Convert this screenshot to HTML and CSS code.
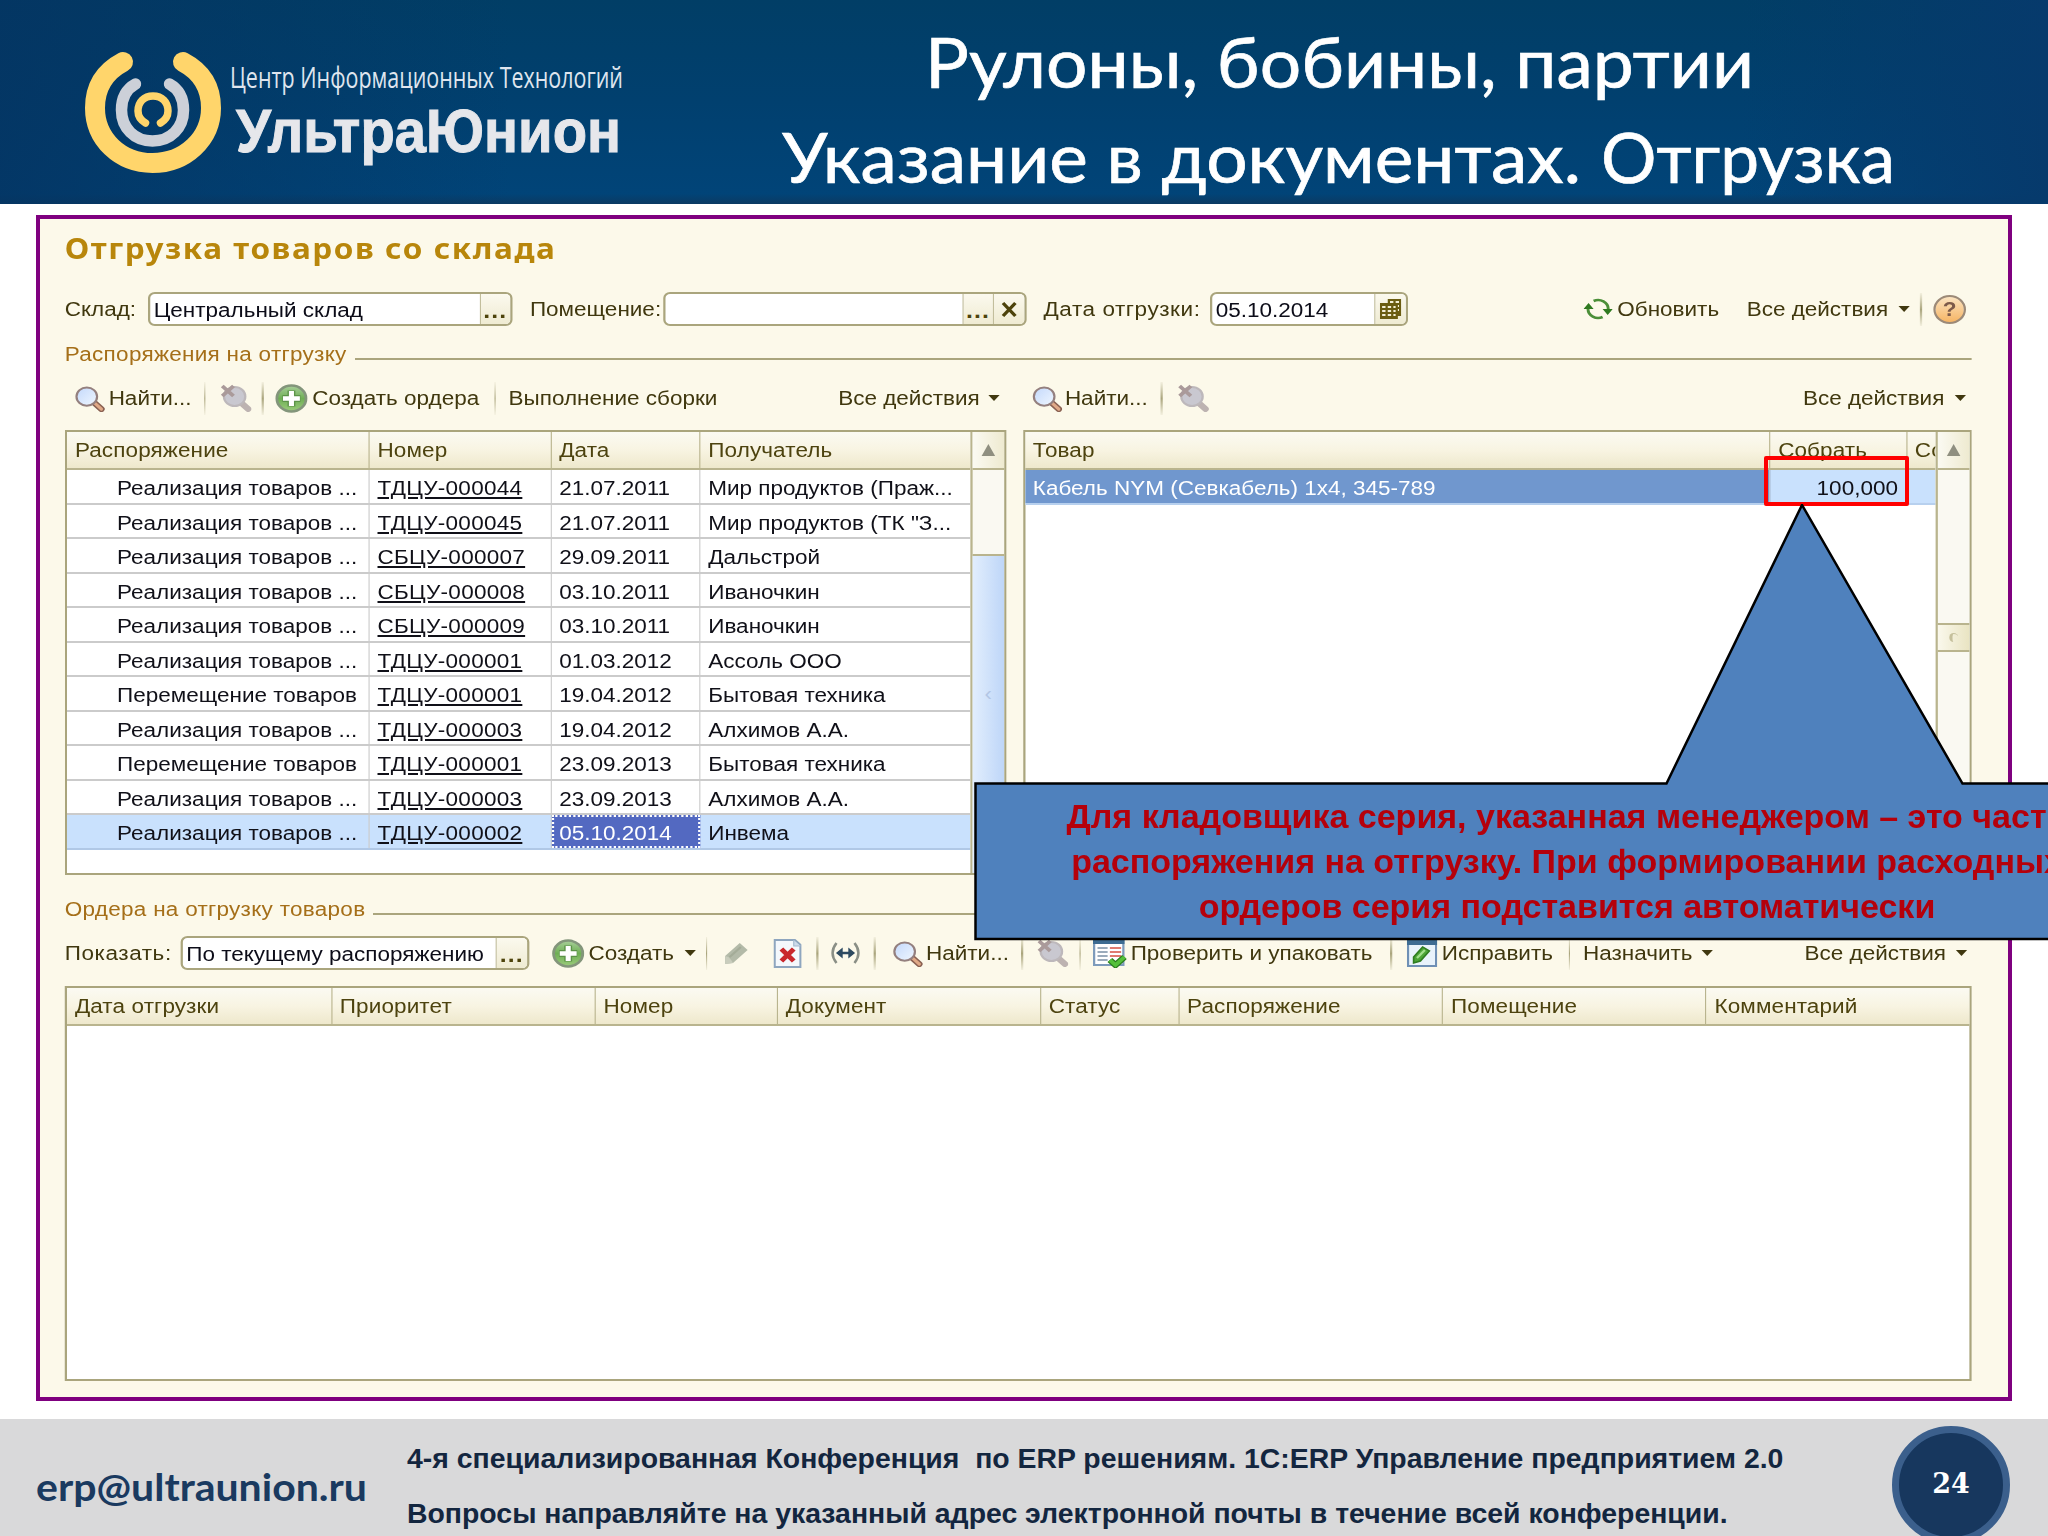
FILE: index.html
```html
<!DOCTYPE html>
<html lang="ru">
<head>
    <meta charset="UTF-8">
    <title>Рулоны, бобины, партии</title>
    <link rel="stylesheet" href="styles.css">
</head>
<body>
    <svg class="sprite" width="0" height="0">
        <defs>
            <linearGradient id="lens" x1="0" y1="0" x2="1" y2="1">
                <stop offset="0" stop-color="#c3d8fb"/>
                <stop offset="1" stop-color="#f0f7ff"/>
            </linearGradient>
            <linearGradient id="green" x1="0" y1="0" x2="0" y2="1">
                <stop offset="0" stop-color="#a9cf9b"/>
                <stop offset="0.5" stop-color="#6fae55"/>
                <stop offset="1" stop-color="#9ccc7c"/>
            </linearGradient>
            <symbol id="find" viewBox="0 0 28 28">
                <path d="M18 18l7 7" stroke="#8a6152" stroke-width="6" stroke-linecap="round"/>
                <path d="M19 19l6 6" stroke="#e0a987" stroke-width="3" stroke-linecap="round"/>
                <circle cx="11.5" cy="12" r="9.5" fill="url(#lens)" stroke="#94807f" stroke-width="2"/>
            </symbol>
            <symbol id="unfind" viewBox="0 0 28 28">
                <path d="M18 18l7 7" stroke="#bdb3b1" stroke-width="6" stroke-linecap="round"/>
                <circle cx="13" cy="12.5" r="9.5" fill="#c9c8d0" stroke="#bdb8bb" stroke-width="2"/>
                <path d="M2 2l10 10M12 2L2 12" stroke="#aa9a9a" stroke-width="3.5"/>
            </symbol>
            <symbol id="add" viewBox="0 0 29 29">
                <circle cx="14.5" cy="14.5" r="13" fill="url(#green)" stroke="#83957b" stroke-width="2.5"/>
                <path d="M14.5 6.500v16M6.500 14.5h16" stroke="#5c9348" stroke-width="7"/>
                <path d="M14.5 7v15M7 14.5h15" stroke="#fff" stroke-width="4.5"/>
            </symbol>
            <symbol id="refresh" viewBox="0 0 26 22">
                <path d="M9 3a9 9 0 0 1 13 8M17 19A9 9 0 0 1 4 11" fill="none" stroke="#4b8f38" stroke-width="2.6"/>
                <path d="M0 11h9L4.500 5zM17 11h9l-4.500 6z" fill="#2f7a20"/>
            </symbol>
            <symbol id="pencil" viewBox="0 0 22 23">
                <path d="M1 22V14L14 1l7 7L8 21z" fill="#b3baa8"/>
                <path d="M1 22v-8l3 1 3 4 1 2z" fill="#c9cdbd"/>
                <path d="M5 15L15 5" stroke="#a4ac98" stroke-width="2"/>
            </symbol>
            <symbol id="delete" viewBox="0 0 25 29">
                <path d="M1 1h18l5 5v22H1z" fill="#f4f8fc" stroke="#8ea6bf" stroke-width="2"/>
                <path d="M18 1v6h6" fill="#cddbea" stroke="#a3b8cd"/>
                <path d="M7 10l11 12M18 10L7 22" stroke="#c9282d" stroke-width="4.500"/>
            </symbol>
            <symbol id="period" viewBox="0 0 28 24">
                <path d="M6 2Q-1 12 6 22M22 2q7 10 0 20" fill="none" stroke="#8a8f86" stroke-width="2.200"/>
                <path d="M8 12h12" stroke="#2d4a60" stroke-width="2.600"/>
                <path d="M5.500 12l6-5.500v11zM22.500 12l-6-5.500v11z" fill="#2d4a60"/>
            </symbol>
            <symbol id="check" viewBox="0 0 30 30">
                <path d="M1 1h26v26H1z" fill="#fff" stroke="#7e9bbb" stroke-width="2"/>
                <path d="M0 0h28v6H0z" fill="#3e6c92"/>
                <path d="M4 10h9M4 14h9M4 18h9M4 22h9" stroke="#9babbb" stroke-width="2"/>
                <path d="M15 10h10M15 14h10M15 18h10" stroke="#df7b70" stroke-width="2.200"/>
                <path d="M15 22l5 5 8-8" fill="none" stroke="#2b7d1d" stroke-width="6"/>
                <path d="M15 22l5 5 8-8" fill="none" stroke="#55c03a" stroke-width="3.500"/>
            </symbol>
            <symbol id="fix" viewBox="0 0 27 30">
                <path d="M1 1h25v27H1z" fill="#e9f3fb" stroke="#6f90b5" stroke-width="2"/>
                <path d="M0 0h27v7H0z" fill="#3e6c92"/>
                <path d="M6 25v-6l8-10 6 4-8 10z" fill="#4da637" stroke="#2f7d20" stroke-width="1.500"/>
                <path d="M9 20l7-8" stroke="#a3df8c" stroke-width="2"/>
            </symbol>
            <symbol id="calendar" viewBox="0 0 19 20">
                <path d="M7 0h12v17h-3v3H0V4h7z" fill="#6b5d12"/>
                <path d="M2 7h3v2H2zM7 7h3v2H7zM12 7h2v2h-2zM2 11h3v2H2zM7 11h3v2H7zM12 11h2v2h-2zM2 15h3v2H2zM7 15h3v2H7zM12 15h2v2h-2zM9 2h3v2H9zM14 2h3v2h-3zM16 6h1v2h-1zM16 10h1v2h-1z" fill="#f5f1d8"/>
            </symbol>
        </defs>
    </svg>

    <header class="header">
        <svg class="logo" width="640" height="204" viewBox="0 0 640 204">
            <path d="M123 62C104 72 95 88 95 108c0 31 25 55 57.500 55S211 139 211 108c0-20-9-36-28-46" fill="none" stroke="#ffd56b" stroke-width="20" stroke-linecap="round"/>
            <path d="M135.500 84c-9 5-14 14-14 26 0 18 13 31 31 31s31-13 31-31c0-12-5-21-14-26" fill="none" stroke="#ccd0d8" stroke-width="11.500" stroke-linecap="round"/>
            <path d="M145.500 123c-5-3-7.500-7-7.500-12 0-9 6-15 15-15s15 6 15 15c0 5-2.500 9-7.500 12" fill="none" stroke="#ffd56b" stroke-width="7.500" stroke-linecap="round"/>
            <text class="logo-small" x="230" y="88" textLength="393" lengthAdjust="spacingAndGlyphs">Центр Информационных Технологий</text>
            <text class="logo-big" x="236" y="152" textLength="385" lengthAdjust="spacingAndGlyphs">УльтраЮнион</text>
        </svg>
        <svg class="title" width="1400" height="204" viewBox="648 0 1400 204">
            <text x="925" y="87.500" textLength="829" lengthAdjust="spacingAndGlyphs">Рулоны, бобины, партии</text>
            <text x="782" y="183" textLength="799" lengthAdjust="spacingAndGlyphs">Указание в документах.</text>
            <text x="1601" y="183" textLength="294" lengthAdjust="spacingAndGlyphs">Отгрузка</text>
        </svg>
    </header>

    <main class="frame">
        <div class="window">
            <h1>Отгрузка товаров со склада</h1>

            <div class="bar bar-filter">
                <label>Склад:</label>
                <div class="field field-store"><span class="value">Центральный склад</span><span class="btn dots">...</span></div>
                <label>Помещение:</label>
                <div class="field field-room"><span class="value"></span><span class="btn dots">...</span><span class="btn"><svg width="15" height="15" viewBox="0 0 15 15"><path d="M2 1l11 13M13 1L2 14" stroke="#4d430b" stroke-width="3"/></svg></span></div>
                <label class="wide">Дата отгрузки:</label>
                <div class="field field-date"><span class="value">05.10.2014</span><span class="btn"><svg width="19" height="20"><use href="#calendar"/></svg></span></div>
                <svg width="26" height="22"><use href="#refresh"/></svg>
                <span>Обновить</span>
                <span>Все действия</span>
                <i class="arrow"></i>
                <i class="sep"></i>
                <span class="help">?</span>
            </div>

            <div class="group group-top"><span>Распоряжения на отгрузку</span></div>

            <div class="panels">
                <section>
                    <div class="bar bar-left">
                        <svg width="28" height="27"><use href="#find"/></svg>
                        <span>Найти...</span>
                        <i class="sep"></i>
                        <svg width="28" height="28"><use href="#unfind"/></svg>
                        <i class="sep"></i>
                        <svg width="29" height="29"><use href="#add"/></svg>
                        <span>Создать ордера</span>
                        <i class="sep"></i>
                        <span>Выполнение сборки</span>
                        <span>Все действия</span>
                        <i class="arrow"></i>
                    </div>
                    <div class="list list-orders">
                        <div class="rows">
                            <div class="head"><span>Распоряжение</span><span>Номер</span><span>Дата</span><span>Получатель</span></div>
                            <div class="row"><span>Реализация товаров ...</span><span><u>ТДЦУ-000044</u></span><span>21.07.2011</span><span>Мир продуктов (Праж...</span></div>
                            <div class="row"><span>Реализация товаров ...</span><span><u>ТДЦУ-000045</u></span><span>21.07.2011</span><span>Мир продуктов (ТК "З...</span></div>
                            <div class="row"><span>Реализация товаров ...</span><span><u>СБЦУ-000007</u></span><span>29.09.2011</span><span>Дальстрой</span></div>
                            <div class="row"><span>Реализация товаров ...</span><span><u>СБЦУ-000008</u></span><span>03.10.2011</span><span>Иваночкин</span></div>
                            <div class="row"><span>Реализация товаров ...</span><span><u>СБЦУ-000009</u></span><span>03.10.2011</span><span>Иваночкин</span></div>
                            <div class="row"><span>Реализация товаров ...</span><span><u>ТДЦУ-000001</u></span><span>01.03.2012</span><span>Ассоль ООО</span></div>
                            <div class="row"><span>Перемещение товаров</span><span><u>ТДЦУ-000001</u></span><span>19.04.2012</span><span>Бытовая техника</span></div>
                            <div class="row"><span>Реализация товаров ...</span><span><u>ТДЦУ-000003</u></span><span>19.04.2012</span><span>Алхимов А.А.</span></div>
                            <div class="row"><span>Перемещение товаров</span><span><u>ТДЦУ-000001</u></span><span>23.09.2013</span><span>Бытовая техника</span></div>
                            <div class="row"><span>Реализация товаров ...</span><span><u>ТДЦУ-000003</u></span><span>23.09.2013</span><span>Алхимов А.А.</span></div>
                            <div class="row selected"><span>Реализация товаров ...</span><span><u>ТДЦУ-000002</u></span><span class="current">05.10.2014</span><span>Инвема</span></div>
                        </div>
                        <div class="scroll"><div class="up"></div><div class="track"></div><div class="thumb">‹</div></div>
                    </div>
                </section>
                <section>
                    <div class="bar bar-right">
                        <svg width="28" height="27"><use href="#find"/></svg>
                        <span>Найти...</span>
                        <i class="sep"></i>
                        <svg width="28" height="28"><use href="#unfind"/></svg>
                        <span>Все действия</span>
                        <i class="arrow"></i>
                    </div>
                    <div class="list list-goods">
                        <div class="rows">
                            <div class="head"><span>Товар</span><span>Собрать</span><span>Со</span></div>
                            <div class="row"><span class="active">Кабель NYM (Севкабель) 1x4, 345-789</span><span class="number">100,000</span><span></span></div>
                        </div>
                        <div class="scroll"><div class="up"></div><div class="track"></div><div class="knob"><i></i></div></div>
                    </div>
                </section>
            </div>

            <div class="group group-bottom"><span>Ордера на отгрузку товаров</span></div>

            <div class="bar bar-orders">
                <label class="wide">Показать:</label>
                <div class="field field-show"><span class="value">По текущему распоряжению</span><span class="btn dots">...</span></div>
                <svg width="29" height="29"><use href="#add"/></svg>
                <span>Создать</span>
                <i class="arrow"></i>
                <i class="sep"></i>
                <svg width="22" height="23"><use href="#pencil"/></svg>
                <svg width="25" height="29"><use href="#delete"/></svg>
                <i class="sep"></i>
                <svg width="28" height="24"><use href="#period"/></svg>
                <i class="sep"></i>
                <svg width="28" height="27"><use href="#find"/></svg>
                <span>Найти...</span>
                <i class="sep"></i>
                <svg width="28" height="28"><use href="#unfind"/></svg>
                <i class="sep"></i>
                <svg width="30" height="30"><use href="#check"/></svg>
                <span>Проверить и упаковать</span>
                <i class="sep"></i>
                <svg width="27" height="30"><use href="#fix"/></svg>
                <span>Исправить</span>
                <i class="sep"></i>
                <span>Назначить</span>
                <i class="arrow"></i>
                <span>Все действия</span>
                <i class="arrow"></i>
            </div>
            <div class="list list-docs">
                <div class="rows">
                    <div class="head"><span>Дата отгрузки</span><span>Приоритет</span><span>Номер</span><span>Документ</span><span>Статус</span><span>Распоряжение</span><span>Помещение</span><span>Комментарий</span></div>
                </div>
            </div>
        </div>
    </main>

    <!-- выноска поверх окна -->
    <div class="mark"></div>
    <div class="callout">
        <svg width="1184" height="437" viewBox="0 0 1184 437">
            <path d="M1.500 279.500H692.500L828 1l160.500 278.500h195V435H1.500z" fill="#4f81bd" stroke="#000" stroke-width="2.500"/>
        </svg>
        <p>Для кладовщика серия, указанная менеджером – это часть<br>распоряжения на отгрузку. При формировании расходных<br>ордеров серия подставится автоматически</p>
    </div>

    <footer class="footer">
        <svg width="420" height="117" viewBox="0 1419 420 117">
            <text class="mail" x="36" y="1501" textLength="331" lengthAdjust="spacingAndGlyphs">erp@ultraunion.ru</text>
        </svg>
        <div class="notes">
            <p>4-я специализированная Конференция&nbsp; по ERP решениям. 1С:ERP Управление предприятием 2.0</p>
            <p>Вопросы направляйте на указанный адрес электронной почты в течение всей конференции.</p>
        </div>
        <div class="page">24</div>
    </footer>
</body>
</html>
```
FILE: styles.css
```css
* {
    box-sizing: border-box;
}
body {
    margin: 0;
    width: 2048px;
    height: 1536px;
    overflow: hidden;
    position: relative;
    display: flex;
    flex-direction: column;
    background: #ffffff;
    font-family: "Liberation Sans", Arial, sans-serif;
}
.sprite {
    position: absolute;
}

/* шапка */
.header {
    height: 204px;
    display: flex;
    justify-content: space-between;
    background: linear-gradient(90deg, rgba(4, 52, 98, 0.8), rgba(0, 70, 120, 0) 25%, rgba(0, 70, 120, 0) 85%, #063a6c), linear-gradient(#013e66, #01406f 50%, #014478 95%, #0b3a62);
}
.logo, .title {
    overflow: visible;
}
.logo-small {
    font: 30px "Open Sans", sans-serif;
    fill: #dfe5ee;
}
.logo-big {
    font: bold 62px "Liberation Sans", Arial, sans-serif;
    fill: #e6e7eb;
    stroke: #e6e7eb;
    stroke-width: 1px;
}
.title {
    font: 70px Lato, "Open Sans", sans-serif;
    fill: #ffffff;
    stroke: #ffffff;
    stroke-width: 0.7px;
}

/* окно растянуто по горизонтали */
.frame {
    width: 1976px;
    height: 1186px;
    margin: 11px 0 0 36px;
    border: 4px solid #7f007f;
    background: #fcf9ea;
}
.window {
    width: 1749px;
    height: 1178px;
    padding-left: 22px;
    transform: scaleX(1.125);
    transform-origin: 0 0;
    font-size: 20px;
    color: #40380f;
}
h1 {
    height: 73px;
    margin: 0;
    font: bold 28px/59px "Noto Sans", sans-serif;
    letter-spacing: 1.4px;
    color: #b8860b;
}
.bar {
    display: grid;
    align-items: center;
    height: 34px;
    white-space: nowrap;
}
.bar svg {
    display: block;
}
.bar-filter {
    grid-template-columns: 74px 339.5px 118px 338.5px 148px 331.5px 30.5px 115px 134.5px 19.5px 12px auto;
}
.bar-left {
    padding-left: 8px;
    grid-template-columns: 31px 84.5px 14px 37.5px 12px 33px 161.5px 13px 293px 133px auto;
}
.bar-right {
    padding-left: 7.5px;
    grid-template-columns: 30px 85px 14.5px 556.5px 135px auto;
}
.bar-orders {
    margin: 13px 0 16px;
    grid-template-columns: 103px 329.5px 33px 85px 19px 16px 44px 38.5px 11.5px 39.5px 15.5px 31px 84.5px 14px 37.5px 12px 34px 230.5px 14.5px 31.5px 112.5px 13px 105px 92px 134px auto;
}
.wide {
    letter-spacing: 0.5px;
}
.sep {
    width: 1.5px;
    height: 33px;
    background: linear-gradient(rgba(170, 165, 125, 0.1), #aaa57d 50%, rgba(170, 165, 125, 0.1));
}
.arrow {
    border: 5px solid transparent;
    border-top: 6px solid #40380f;
    border-bottom: 0;
    width: 0;
}
.field {
    display: flex;
    height: 34px;
    border: 2px solid #aaa57d;
    border-radius: 6px;
    background: #ffffff;
    color: #0c0c18;
    line-height: 32px;
    overflow: hidden;
}
.field-store {
    width: 324px;
}
.field-room {
    width: 323px;
}
.field-date {
    width: 175.5px;
}
.field-show {
    width: 309.5px;
}
.value {
    flex: 1;
    padding-left: 3px;
}
.btn {
    width: 27.5px;
    border-left: 1.5px solid #c2be9c;
    background: linear-gradient(#fbf9ee, #efebd2);
    display: flex;
    align-items: center;
    justify-content: center;
}
.dots {
    padding-top: 3px;
    font-weight: bold;
    font-size: 22px;
    letter-spacing: 1px;
    color: #4d430b;
}
.help {
    width: 29px;
    height: 29px;
    border: 2px solid #9c8a78;
    border-radius: 50%;
    background: linear-gradient(#fbe3c0, #f6b565);
    text-align: center;
    line-height: 25px;
    font-weight: bold;
    color: #7d5a4a;
}
.group {
    display: flex;
    height: 28px;
    width: 1695px;
    line-height: 28px;
    white-space: nowrap;
    letter-spacing: 0.25px;
    color: #a56f19;
}
.group::after {
    content: "";
    flex: 1;
    height: 2px;
    margin: 18px 0 0 7px;
    background: #aaa57d;
}
.group-top {
    margin: 14px 0 13px;
}
.group-bottom {
    margin-top: 20px;
}

/* таблицы */
.panels {
    display: flex;
    gap: 14.5px;
}
.list {
    display: flex;
    border: 2px solid #aaa57d;
    background: #ffffff;
}
.list-orders {
    width: 837px;
    height: 445px;
    margin-top: 15px;
}
.list-goods {
    width: 843.5px;
    height: 445px;
    margin-top: 15px;
}
.list-docs {
    width: 1695px;
    height: 395px;
}
.rows {
    flex: 1;
}
.head, .row {
    display: grid;
}
.list-orders .head, .list-orders .row {
    grid-template-columns: 269px 161.5px 132.5px auto;
}
.list-goods .head, .list-goods .row {
    grid-template-columns: 662.5px 121.5px auto;
}
.list-docs .head {
    grid-template-columns: 235.5px 234.4px 162px 233.7px 123px 234.7px 234.2px auto;
}
.head {
    height: 38px;
    line-height: 36px;
    letter-spacing: 0.1px;
    background: linear-gradient(#fbfaf2, #f8f4e2 50%, #eee8cc);
    border-bottom: 2px solid #b9b48e;
    color: #4d430f;
}
.head span, .row span {
    overflow: hidden;
    white-space: nowrap;
    padding-left: 7px;
    border-right: 1.5px solid #b9b48e;
}
.row {
    height: 34.5px;
    line-height: 36px;
    border-bottom: 2px solid #cbcbcb;
    color: #101018;
}
.row span {
    border-right-color: #cbcbcb;
}
.list-orders .row span:first-child {
    padding-left: 44.5px;
}
.rows .head span:last-child, .rows .row span:last-child {
    border-right: 0;
}
.row u {
    letter-spacing: 0.25px;
    text-decoration-thickness: 2px;
    text-underline-offset: 2px;
}
.row.selected {
    background: #c9e1fd;
    border-color: #b0c8e6;
}
.row .current {
    background: #5369c1;
    color: #ffffff;
    border: 2px dotted #ffffff;
    padding-left: 5px;
    line-height: 32px;
}
.list-goods .row {
    background: #c9e1fd;
    border-color: #b7d0ee;
}
.row .active {
    background: #7097ce;
    color: #ffffff;
}
.row .number {
    text-align: right;
    padding-right: 7px;
}
.scroll {
    width: 30px;
    display: flex;
    flex-direction: column;
    border-left: 2px solid #b9b48e;
    background: #faf9f2;
}
.up {
    height: 38px;
    display: flex;
    align-items: center;
    justify-content: center;
    border-bottom: 2px solid #b9b48e;
    background: linear-gradient(90deg, #fbfaf2, #eeead0);
}
.up::before {
    content: "";
    border: 6px solid transparent;
    border-bottom: 12px solid #8f8f80;
    border-top: 0;
}
.list-orders .track {
    height: 84px;
}
.thumb {
    flex: 1;
    padding-top: 126px;
    border-top: 2px solid #b9b48e;
    background: linear-gradient(90deg, #e2eefd, #bed6f8);
    text-align: center;
    color: #b3c6e4;
}
.list-goods .track {
    height: 153px;
}
.knob {
    height: 29px;
    border: solid #b9b48e;
    border-width: 2px 0;
    background: linear-gradient(90deg, #faf8ec, #e9e4c2);
}
.knob i {
    display: block;
    width: 8px;
    height: 9px;
    margin: 8px 0 0 10px;
    border-radius: 50%;
    border-left: 3px solid #c5c09c;
    border-top: 1px solid #c5c09c;
}

/* выноска */
.mark {
    position: absolute;
    left: 1764px;
    top: 456px;
    width: 145px;
    height: 50px;
    border: 4px solid #ff0000;
    border-radius: 2px;
}
.callout {
    position: absolute;
    left: 974px;
    top: 504px;
    width: 1184px;
    height: 437px;
}
.callout p {
    position: absolute;
    left: 0;
    top: 290px;
    width: 1186px;
    margin: 0;
    text-align: center;
    white-space: nowrap;
    font: bold 34px/45px "Liberation Sans", Arial, sans-serif;
    color: #b5000b;
}

/* подвал */
.footer {
    display: flex;
    height: 117px;
    margin-top: 18px;
    background: #d9d9da;
}
.mail {
    font: bold 38px Lato, "Open Sans", sans-serif;
    fill: #1a3a60;
}
.notes {
    width: 1472px;
    margin-left: -13px;
    padding-top: 12px;
}
.notes p {
    margin: 0;
    white-space: nowrap;
    font-weight: bold;
    font-size: 28.420px;
    line-height: 54.500px;
    color: #13263f;
}
.page {
    width: 118px;
    height: 118px;
    margin: 7px 0 0 13px;
    flex: none;
    border: 7px solid #3b5f8c;
    border-radius: 50%;
    background: #17375e;
    text-align: center;
    font: bold 27px/102px "DejaVu Serif", serif;
    color: #ffffff;
}
```
